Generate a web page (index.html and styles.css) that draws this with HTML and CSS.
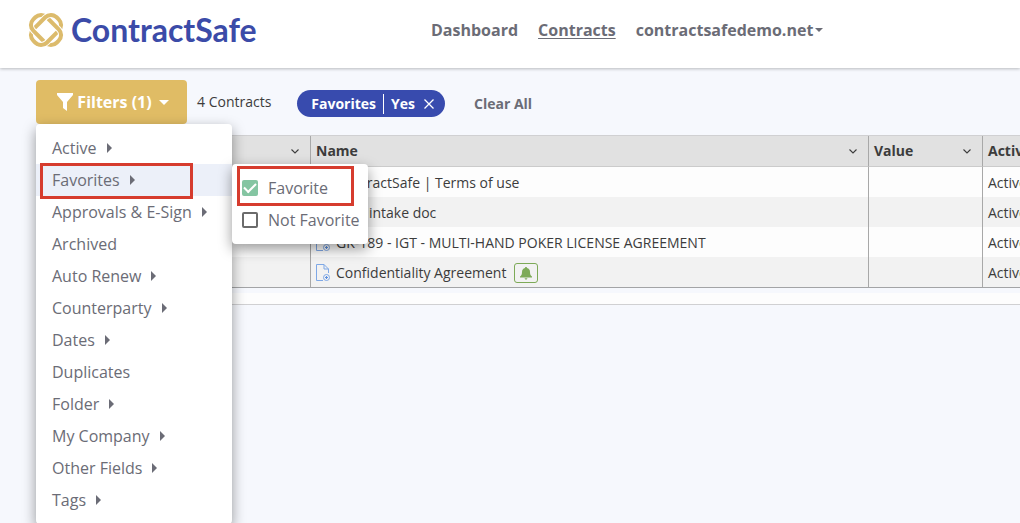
FILE: index.html
```
<!DOCTYPE html>
<html lang="en">
<head>
<meta charset="utf-8">
<title>ContractSafe - Contracts</title>
<link rel="stylesheet" href="styles.css">
</head>
<body>
<svg class="defs" width="0" height="0" aria-hidden="true">
  <symbol id="chevron" viewBox="0 0 10 10"><path d="M1.500 3.500 5 7 8.500 3.500" fill="none" stroke="currentColor" stroke-width="1.1"/></symbol>
  <symbol id="doc" viewBox="0 0 14 18"><path d="M7 16.500H.5V.5H8L12.500 5V9M8 .5V5H12.500" fill="none" stroke="#7fa8e6"/><circle cx="10.500" cy="13.500" r="3" fill="none" stroke="#7fa8e6"/><path d="M10.500 12V15M9 13.500H12" stroke="#5c8fe0"/></symbol>
</svg>
<header class="topbar">
  <a class="brand" href="#">
    <svg class="brand-mark" viewBox="0 0 36 36" aria-hidden="true">
      <defs>
        <rect id="ring" x="1.500" y="8.500" width="33" height="19" rx="8"/>
        <clipPath id="weave"><path d="M10 0H27V13H10ZM10 23H26V36H10Z"/></clipPath>
      </defs>
      <g fill="none" stroke="#dcbb6c" stroke-width="4">
        <use href="#ring" transform="rotate(-45 18 18)"/>
        <use href="#ring" transform="rotate(45 18 18)" stroke="#fff" stroke-width="6"/>
        <use href="#ring" transform="rotate(45 18 18)"/>
        <g clip-path="url(#weave)">
          <use href="#ring" transform="rotate(-45 18 18)" stroke="#fff" stroke-width="6"/>
          <use href="#ring" transform="rotate(-45 18 18)"/>
        </g>
      </g>
    </svg>
    <span>ContractSafe</span>
  </a>
  <nav class="nav">
    <a href="#">Dashboard</a>
    <a class="current" href="#">Contracts</a>
    <a class="account" href="#">contractsafedemo.net<i class="caret small"></i></a>
  </nav>
</header>
<main class="page">
  <div class="toolbar">
    <div class="filter">
      <button class="filter-btn" type="button">
        <svg width="16" height="18" viewBox="0 0 16 18" aria-hidden="true"><path d="M0 0H16V2L10 9V18L6 15V9L0 2Z" fill="#fff"/></svg>
        <span>Filters (1)</span><i class="caret"></i>
      </button>
      <ul class="menu">
        <li><button type="button">Active<i class="arrow"></i></button></li>
        <li class="open"><button type="button">Favorites<i class="arrow"></i></button>
          <div class="mark mark-item"></div>
          <div class="submenu">
            <label><input type="checkbox" checked>Favorite</label>
            <label><input type="checkbox">Not Favorite</label>
            <div class="mark mark-option"></div>
          </div>
        </li>
        <li><button type="button">Approvals &amp; E-Sign<i class="arrow"></i></button></li>
        <li><button type="button">Archived</button></li>
        <li><button type="button">Auto Renew<i class="arrow"></i></button></li>
        <li><button type="button">Counterparty<i class="arrow"></i></button></li>
        <li><button type="button">Dates<i class="arrow"></i></button></li>
        <li><button type="button">Duplicates</button></li>
        <li><button type="button">Folder<i class="arrow"></i></button></li>
        <li><button type="button">My Company<i class="arrow"></i></button></li>
        <li><button type="button">Other Fields<i class="arrow"></i></button></li>
        <li><button type="button">Tags<i class="arrow"></i></button></li>
      </ul>
    </div>
    <span class="count">4 Contracts</span>
    <div class="chip"><span>Favorites</span><span class="chip-value">Yes</span>
      <button type="button" aria-label="Remove filter"><svg width="10" height="10" viewBox="0 0 10 10"><path d="M.5.5 9.500 9.500M9.500.5.5 9.500" stroke="#fff" stroke-width="1.3"/></svg></button>
    </div>
    <button class="clear" type="button">Clear All</button>
  </div>
  <div class="grid">
    <table>
      <colgroup><col class="c-first"><col><col class="c-value"><col class="c-active"></colgroup>
      <thead><tr>
        <th><div class="head"><span></span><svg width="10" height="10"><use href="#chevron"/></svg></div></th>
        <th><div class="head">Name<svg width="10" height="10"><use href="#chevron"/></svg></div></th>
        <th><div class="head">Value<svg width="10" height="10"><use href="#chevron"/></svg></div></th>
        <th>Active</th>
      </tr></thead>
      <tbody>
        <tr><td></td><td><div class="name"><svg width="14" height="18"><use href="#doc"/></svg>ContractSafe | Terms of use</div></td><td></td><td>Active</td></tr>
        <tr><td></td><td><div class="name"><svg width="14" height="18"><use href="#doc"/></svg>New intake doc</div></td><td></td><td>Active</td></tr>
        <tr><td></td><td><div class="name"><svg width="14" height="18"><use href="#doc"/></svg>GK-189 - IGT - MULTI-HAND POKER LICENSE AGREEMENT</div></td><td></td><td>Active</td></tr>
        <tr><td></td><td><div class="name"><svg width="14" height="18"><use href="#doc"/></svg>Confidentiality Agreement<span class="bell"><svg width="12" height="13" viewBox="0 0 12 13"><path d="M6 0C6.600 0 7 .4 7 1 9 1.500 10 3 10 5 10 7.500 10.500 8.500 12 9.500V10.500H0V9.500C1.500 8.500 2 7.500 2 5 2 3 3 1.500 5 1 5 .4 5.400 0 6 0ZM4.500 11.300H7.500Q7 12.700 6 12.700T4.500 11.300Z" fill="#7daa57"/></svg></span></div></td><td></td><td>Active</td></tr>
      </tbody>
    </table>
  </div>
  <div class="scroll-strip"></div>
</main>
</body>
</html>
```
FILE: styles.css
```
* { box-sizing: border-box; }
body {
  margin: 0;
  min-height: 100vh;
  overflow: hidden;
  background: #f6f8fd;
  color: #3c3c3c;
  font: 14px/20px "Open Sans", "Noto Sans", sans-serif;
}
button { border: 0; padding: 0; background: none; font: inherit; color: inherit; cursor: pointer; }
a { color: inherit; text-decoration: none; }
.defs { position: absolute; }

.topbar {
  display: flex;
  height: 68px;
  padding: 12px 28px 0;
  background: #fff;
  box-shadow: 0 1px 3px rgba(0, 0, 0, .25);
}
.brand {
  display: flex;
  align-items: center;
  gap: 7px;
  width: 403px;
  height: 36px;
  color: #3b4ba8;
  font: 700 32px/36px Lato, sans-serif;
}
.brand-mark { width: 36px; height: 36px; }
.nav {
  display: flex;
  align-items: flex-start;
  gap: 20px;
  padding-top: 6px;
  color: #6b6c76;
  font-size: 16px;
  font-weight: 700;
  line-height: 24px;
}
.current { text-decoration: underline; text-underline-offset: 2px; }
.account { display: flex; align-items: center; gap: 2px; }
.caret {
  border: solid transparent;
  border-width: 5px 5px 0;
  border-top-color: currentColor;
}
.caret.small { border-width: 4px 4px 0; border-top-color: currentColor; }

.page { padding: 12px 0 0 36px; }
.toolbar { display: flex; align-items: flex-start; height: 55px; }
.filter { position: relative; }
.filter-btn {
  display: flex;
  align-items: center;
  justify-content: center;
  gap: 4px;
  width: 151px;
  height: 44px;
  padding-left: 3px;
  border-radius: 4px;
  background: #e0bc65;
  color: #fff;
  font-size: 16px;
  font-weight: 700;
}
.filter-btn .caret { margin-left: 3px; }
.menu {
  position: absolute;
  z-index: 2;
  top: 44px;
  left: 0;
  width: 196px;
  margin: 0;
  padding: 8px 0;
  list-style: none;
  border-radius: 4px;
  background: #fff;
  color: #6b6c76;
  font-size: 16px;
  line-height: 24px;
  box-shadow: 0 5px 14px rgba(0, 0, 0, .4);
}
.menu li { position: relative; }
.menu button {
  display: flex;
  align-items: center;
  gap: 10px;
  width: 100%;
  padding: 4px 16px;
  white-space: nowrap;
}
.menu .open { background: #ecf0f9; }
.arrow {
  border: solid transparent;
  border-width: 5px 0 5px 5px;
  border-left-color: currentColor;
}
.submenu {
  position: absolute;
  top: 0;
  left: 100%;
  padding: 8px;
  border-radius: 4px;
  background: #fff;
  box-shadow: 0 5px 14px rgba(0, 0, 0, .4);
}
.submenu label {
  display: flex;
  align-items: center;
  gap: 9px;
  height: 32px;
  padding-left: 1px;
  white-space: nowrap;
}
.submenu input {
  appearance: none;
  width: 16px;
  height: 16px;
  margin: 0 1px;
  border: 2px solid #6b6b6b;
  border-radius: 2px;
  background: #fff;
}
.submenu input:checked {
  display: grid;
  place-items: center;
  border: 0;
  background: #84c5a2;
}
.submenu input:checked::before {
  content: "";
  width: 10px;
  height: 5px;
  margin-bottom: 3px;
  border: solid #fff;
  border-width: 0 0 2px 2px;
  transform: rotate(-45deg);
}
.mark { position: absolute; border: 3px solid #d63c2e; pointer-events: none; }
.mark-item { inset: -1px 39px -3px 4px; }
.mark-option { top: 2px; left: 5px; right: 14px; height: 40px; }

.count { padding: 12px 0 0 10px; }
.chip {
  display: flex;
  align-items: center;
  height: 27px;
  margin: 10px 0 0 26px;
  padding: 0 11px 0 14px;
  border-radius: 14px;
  background: #384bae;
  color: #fff;
  font-weight: 700;
}
.chip-value { margin: 0 9px 0 7px; padding-left: 7px; border-left: 1px solid #fff; }
.chip button { display: flex; }
.clear { margin: 14px 0 0 29px; color: #6b6c76; font-weight: 700; }

.grid {
  border: solid #a3a4a6;
  border-width: 1px 0;
  border-top-color: #d0d0d2;
}
table { width: 100%; table-layout: fixed; border-collapse: separate; border-spacing: 0; }
.c-first { width: 275px; }
.c-value { width: 114px; }
.c-active { width: 37px; }
th, td {
  height: 30px;
  padding: 0 5px;
  border-right: 1px solid #a8a8a8;
  overflow: hidden;
  text-align: left;
  white-space: nowrap;
}
th:last-child, td:last-child { padding-right: 0; border-right: 0; text-overflow: clip; }
th { height: 31px; background: #e1e1e1; border-bottom: 1px solid #cbcbcb; font-weight: 700; }
td { padding-top: 2px; background: #fdfdfd; }
tr:nth-child(even) td { background: #f2f2f2; }
.head { display: flex; align-items: center; justify-content: space-between; padding-right: 5px; }
.name { display: flex; align-items: center; gap: 6px; }
.bell {
  display: grid;
  place-items: center;
  width: 24px;
  height: 20px;
  margin-left: 2px;
  border: 1px solid #7daa57;
  border-radius: 3px;
}
.scroll-strip { height: 12px; margin-top: 5px; background: #fdfdfd; border-bottom: 1px solid #d0d0d2; }
```
